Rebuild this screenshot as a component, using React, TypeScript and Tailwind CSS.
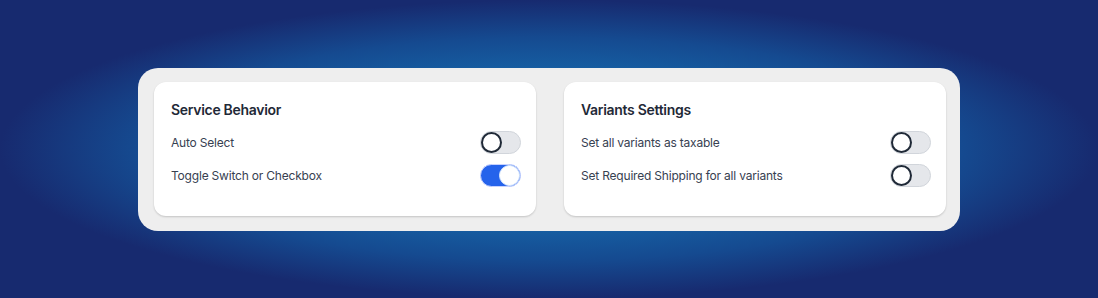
import React, { useState } from 'react';

type ToggleProps = {
  checked: boolean;
  onChange: () => void;
};

const Toggle: React.FC<ToggleProps> = ({ checked, onChange }) => {
  return (
    <button
      type="button"
      onClick={onChange}
      className={`relative flex h-[23px] w-[41px] shrink-0 items-center rounded-full border ${
        checked ? 'border-[#c7d2fe] bg-[#2563eb]' : 'border-[#d1d5db] bg-[#e5e7eb]'
      }`}
    >
      <span
        className={`absolute top-0 h-[21px] w-[21px] rounded-full bg-white ${
          checked ? 'right-0 border border-[#dbeafe]' : 'left-0 border-2 border-[#1f2937]'
        }`}
      />
    </button>
  );
};

type Row = { label: string; on: boolean };

const SettingsCard: React.FC<{ title: string; rows: Row[] }> = ({ title, rows }) => {
  const [state, setState] = useState(rows.map((r) => r.on));
  return (
    <div className="flex-1 rounded-xl bg-white pt-[18px] pr-[15px] pb-[29px] pl-[17px] shadow-[0_1px_2px_rgba(0,0,0,0.18)]">
      <h2 className="mb-[11px] text-[14px] leading-5 font-semibold tracking-[-0.3px] text-[#1f2937]">
        {title}
      </h2>
      <div className="flex flex-col gap-[10px]">
        {rows.map((row, i) => (
          <div key={row.label} className="flex h-[23px] items-center justify-between">
            <span className="pt-[2px] text-[12px] tracking-[-0.2px] text-[#374151]">{row.label}</span>
            <Toggle
              checked={state[i]}
              onChange={() => setState((s) => s.map((v, j) => (j === i ? !v : v)))}
            />
          </div>
        ))}
      </div>
    </div>
  );
};

export default function App() {
  return (
    <div
      className="flex h-[298px] w-full items-center justify-center bg-[radial-gradient(ellipse_50%_50%_at_50%_50%,#1668ab_42%,#154a90_75%,#172a6f_100%)]"
      style={{ fontFamily: 'Inter, "Noto Sans", sans-serif' }}
    >
      <div className="flex w-[822px] gap-[28px] rounded-[20px] bg-[#eeeeee] pt-[14px] pr-[14px] pb-[15px] pl-[16px]">
        <SettingsCard
          title="Service Behavior"
          rows={[
            { label: 'Auto Select', on: false },
            { label: 'Toggle Switch or Checkbox', on: true },
          ]}
        />
        <SettingsCard
          title="Variants Settings"
          rows={[
            { label: 'Set all variants as taxable', on: false },
            { label: 'Set Required Shipping for all variants', on: false },
          ]}
        />
      </div>
    </div>
  );
}
